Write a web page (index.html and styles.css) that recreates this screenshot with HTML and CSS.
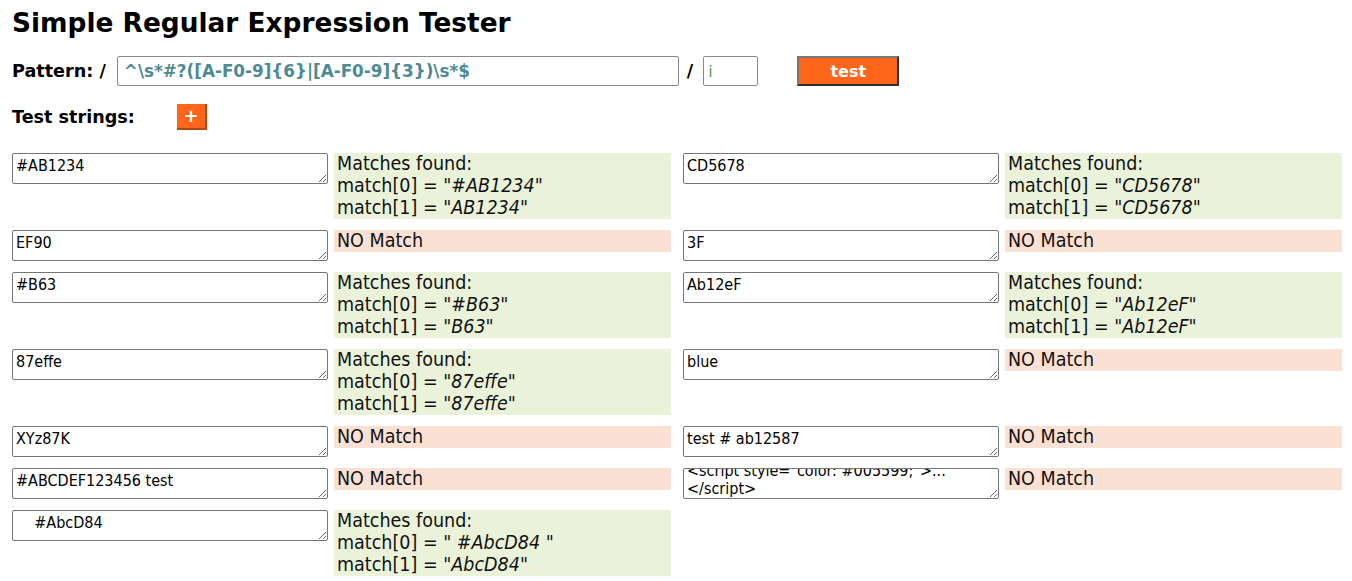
FILE: index.html
```html
<!DOCTYPE html>
<html lang="en">
<head>
<meta charset="utf-8">
<title>Simple Regular Expression Tester</title>
<link rel="stylesheet" href="styles.css">
</head>
<body>
<div class="page">
  <h1 class="title">Simple Regular Expression Tester</h1>
  <div class="pattern-row">
    <span class="label">Pattern: /</span>
    <input class="pattern" type="text" value="^\s*#?([A-F0-9]{6}|[A-F0-9]{3})\s*$">
    <span class="slash">/</span>
    <input class="flags" type="text" value="i">
    <button class="test-btn">test</button>
  </div>
  <div class="strings-head">
    <span class="label strings-label">Test strings:</span>
    <button class="add-btn">+</button>
  </div>
  <div class="grid">
    <div class="item">
      <textarea class="str">#AB1234</textarea>
      <div class="result ok">Matches found:<br>match[0] = "<em>#AB1234</em>"<br>match[1] = "<em>AB1234</em>"</div>
    </div>
    <div class="item">
      <textarea class="str">CD5678</textarea>
      <div class="result ok">Matches found:<br>match[0] = "<em>CD5678</em>"<br>match[1] = "<em>CD5678</em>"</div>
    </div>
    <div class="item">
      <textarea class="str">EF90</textarea>
      <div class="result no">NO Match</div>
    </div>
    <div class="item">
      <textarea class="str">3F</textarea>
      <div class="result no">NO Match</div>
    </div>
    <div class="item">
      <textarea class="str">#B63</textarea>
      <div class="result ok">Matches found:<br>match[0] = "<em>#B63</em>"<br>match[1] = "<em>B63</em>"</div>
    </div>
    <div class="item">
      <textarea class="str">Ab12eF</textarea>
      <div class="result ok">Matches found:<br>match[0] = "<em>Ab12eF</em>"<br>match[1] = "<em>Ab12eF</em>"</div>
    </div>
    <div class="item">
      <textarea class="str">87effe</textarea>
      <div class="result ok">Matches found:<br>match[0] = "<em>87effe</em>"<br>match[1] = "<em>87effe</em>"</div>
    </div>
    <div class="item">
      <textarea class="str">blue</textarea>
      <div class="result no">NO Match</div>
    </div>
    <div class="item">
      <textarea class="str">XYz87K</textarea>
      <div class="result no">NO Match</div>
    </div>
    <div class="item">
      <textarea class="str">test # ab12587</textarea>
      <div class="result no">NO Match</div>
    </div>
    <div class="item">
      <textarea class="str">#ABCDEF123456 test</textarea>
      <div class="result no">NO Match</div>
    </div>
    <div class="item">
      <textarea class="str scrolled" id="scrolled">&lt;script style="color: #005599;"&gt;...&lt;/script&gt;</textarea>
      <div class="result no">NO Match</div>
    </div>
    <div class="item">
      <textarea class="str">    #AbcD84</textarea>
      <div class="result ok">Matches found:<br>match[0] = " <em> #AbcD84 </em> "<br>match[1] = "<em>AbcD84</em>"</div>
    </div>
  </div>
</div>
<script src="script.js"></script>
</body>
</html>
```

FILE: styles.css
```css
html, body {
  margin: 0;
  padding: 0;
  background: #ffffff;
  color: #000000;
}
.page {
  padding: 0 10px 0 12px;
  font-family: "DejaVu Sans", Verdana, sans-serif;
}
.title {
  margin: 0;
  padding-top: 7px;
  font-size: 26.4px;
  line-height: 32px;
  font-weight: bold;
}
.pattern-row {
  display: flex;
  align-items: center;
  height: 30px;
  margin-top: 17px;
}
.label {
  font-weight: bold;
  font-size: 17.6px;
}
.pattern {
  box-sizing: border-box;
  width: 562px;
  height: 30px;
  margin-left: 11px;
  padding: 0 6px;
  border: 1px solid #8a8a8a;
  border-radius: 2px;
  font-family: "DejaVu Sans", Verdana, sans-serif;
  font-weight: bold;
  font-size: 16.8px;
  color: #4d8a93;
  outline: none;
}
.slash {
  font-weight: bold;
  font-size: 17.6px;
  margin-left: 8px;
}
.flags {
  box-sizing: border-box;
  width: 55px;
  height: 30px;
  margin-left: 10px;
  padding: 0 4px;
  border: 1px solid #8a8a8a;
  border-radius: 2px;
  font-family: "DejaVu Sans", Verdana, sans-serif;
  font-size: 16px;
  color: #6a9a45;
  outline: none;
}
.test-btn {
  box-sizing: border-box;
  width: 102px;
  height: 30px;
  margin-left: 39px;
  padding: 0;
  background: #ff6619;
  color: #ffffff;
  font-family: "DejaVu Sans", Verdana, sans-serif;
  font-weight: bold;
  font-size: 16px;
  border: 2px solid;
  border-color: #777777 #2e2e2e #2e2e2e #777777;
}
.strings-head {
  display: flex;
  align-items: center;
  margin-top: 18px;
  height: 26px;
}
.strings-label {
  width: 165px;
}
.add-btn {
  box-sizing: border-box;
  width: 30px;
  height: 26px;
  padding: 0;
  background: #ff6619;
  color: #ffffff;
  font-family: "DejaVu Sans", Verdana, sans-serif;
  font-weight: bold;
  font-size: 18px;
  line-height: 20px;
  border: 0;
  border-right: 2px solid #b4470f;
  border-bottom: 2px solid #b4470f;
}
.grid {
  display: grid;
  grid-template-columns: 1fr 1fr;
  column-gap: 12px;
  row-gap: 11px;
  margin-top: 23px;
}
.item {
  display: flex;
  align-items: flex-start;
}
.str {
  box-sizing: border-box;
  flex: none;
  width: 316px;
  height: 31px;
  margin: 0;
  padding: 3px 3px 2px;
  border: 1px solid #767676;
  border-radius: 2px;
  font-family: "DejaVu Sans Condensed", "DejaVu Sans", Tahoma, sans-serif;
  font-size: 16px;
  line-height: 18px;
  color: #000000;
  outline: none;
  overflow: hidden;
}
.result {
  flex: 1;
  margin-left: 6px;
  padding: 0 3px;
  font-family: "DejaVu Sans Condensed", "DejaVu Sans", Tahoma, sans-serif;
  font-size: 19.5px;
  line-height: 22px;
  color: #111111;
}
.result em {
  font-style: italic;
}
.ok {
  background: #eaf3da;
}
.no {
  background: #fbe0d4;
}
```

FILE: script.js
```js
var t = document.getElementById('scrolled');
if (t) { t.scrollTop = 10; }
```
